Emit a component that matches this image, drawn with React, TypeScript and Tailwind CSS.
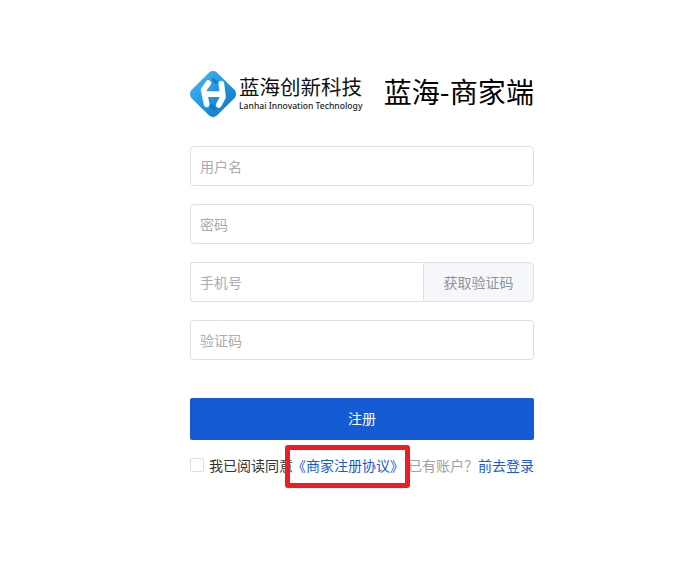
const font = { fontFamily: '"Noto Sans CJK SC", "Liberation Sans", sans-serif' };

function Logo() {
  return (
    <svg width="46" height="46" viewBox="1 1 44 44" className="shrink-0">
      <defs>
        <linearGradient id="g1" x1="0" y1="0" x2="1" y2="1">
          <stop offset="0" stopColor="#52bdf0" />
          <stop offset="0.5" stopColor="#1f97e2" />
          <stop offset="1" stopColor="#0f6fc4" />
        </linearGradient>
      </defs>
      <path d="M23 1c1.6 0 3 .6 4.2 1.8L43.2 18.8c2.400 2.400 2.400 6 0 8.400L27.200 43.200c-2.400 2.400-6 2.400-8.400 0L2.800 27.200c-2.400-2.400-2.400-6 0-8.400L18.800 2.800C20 1.600 21.400 1 23 1z" fill="url(#g1)" />
      <path d="M18.500 12.500 L14 19 L17 33 M31 13 L32.500 26 L28.500 33.500 M15.500 23 H31" fill="none" stroke="#fff" strokeWidth="5.500" strokeLinejoin="round" strokeLinecap="round" />
      <path d="M23 9 L26 12 M21 34 L24 37" stroke="#0b62b5" strokeWidth="3" opacity="0.55" strokeLinecap="round" />
    </svg>
  );
}

function Field({ placeholder }: { placeholder: string }) {
  return (
    <div className="flex h-10 w-full items-center rounded border border-[#dcdfe6] bg-white px-[9px] text-sm text-[#a8abb2]">
      {placeholder}
    </div>
  );
}

export default function App() {
  return (
    <div className="relative h-[569px] w-full bg-white" style={font}>
      <div className="mx-auto flex w-[344px] translate-x-[21px] flex-col pt-[70px]">
        <div className="flex h-[48px] items-center justify-between">
          <div className="flex items-center gap-[3px]">
            <Logo />
            <div className="flex w-[125px] flex-col pb-[2px]">
              <span className="text-[20.500px] leading-[25px] whitespace-nowrap text-[#111]">蓝海创新科技</span>
              <span className="mt-[1px] text-[8.600px] leading-[12px] font-medium whitespace-nowrap text-[#222]" style={{ fontFamily: '"Noto Sans", sans-serif' }}>
                Lanhai Innovation Technology
              </span>
            </div>
          </div>
          <span className="pb-[7px] text-[28px] leading-[36px] tracking-[0.1px] text-black">蓝海-商家端</span>
        </div>

        <div className="mt-7 flex flex-col gap-[18px]">
          <Field placeholder="用户名" />
          <Field placeholder="密码" />
          <div className="flex h-10">
            <div className="flex flex-1 items-center rounded-l border border-r-0 border-[#dcdfe6] px-[9px] text-sm text-[#a8abb2]">手机号</div>
            <button className="w-[111px] rounded-r border border-[#dcdfe6] bg-[#f5f7fa] text-sm text-[#909399]">获取验证码</button>
          </div>
          <Field placeholder="验证码" />
        </div>

        <button className="mt-[38px] h-[42px] w-full rounded-[2px] bg-[#155bd4] pb-[2px] text-sm text-white">注册</button>

        <div className="mt-[16px] flex h-5 items-center justify-between pb-[2px] text-sm whitespace-nowrap">
          <div className="flex items-center">
            <span className="mr-[5px] h-[14px] w-[14px] rounded-[2px] border border-[#dcdfe6] bg-white" />
            <span className="text-[#333]">我已阅读同意</span>
            <span className="ml-[-1px] text-[#155bd4]">《商家注册协议》</span>
          </div>
          <div>
            <span className="text-[#a0a0a0]">已有账户？</span>
            <span className="text-[#155bd4]">前去登录</span>
          </div>
        </div>
      </div>
      <div className="absolute left-[285px] top-[445px] h-[43px] w-[125px] rounded-[3px] border-[5px] border-[#ee1c25]" />
    </div>
  );
}
